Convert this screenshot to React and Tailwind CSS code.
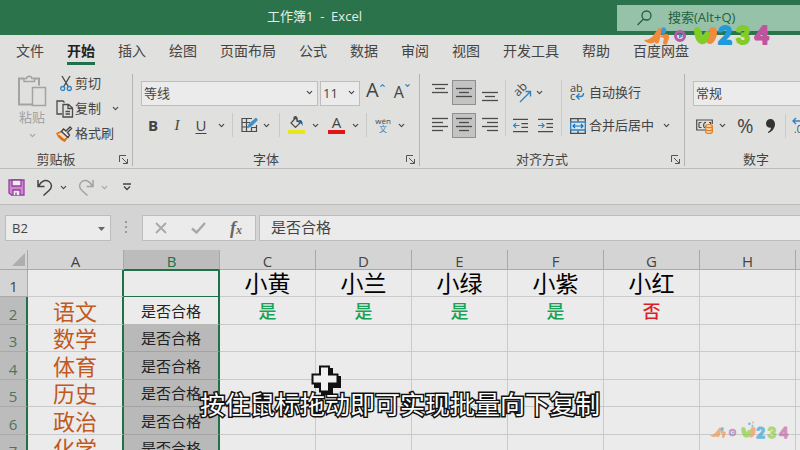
import { ChevronDown } from 'lucide-react';

const tabs = ['文件', '开始', '插入', '绘图', '页面布局', '公式', '数据', '审阅', '视图', '开发工具', '帮助', '百度网盘'];
const columns = ['A', 'B', 'C', 'D', 'E', 'F', 'G', 'H', 'I'];
const names = ['', '', '小黄', '小兰', '小绿', '小紫', '小红', '', ''];
const results = ['是', '是', '是', '是', '否', '', ''];
const subjects = ['语文', '数学', '体育', '历史', '政治', '化学'];

function Chevron({ className = '' }) {
    return <ChevronDown size={9} strokeWidth={3} className={`shrink-0 ${className}`} />;
}

function Launcher() {
    return (
        <button aria-label="更多选项" className="absolute right-1 bottom-1">
            <svg width="9" height="9" viewBox="0 0 9 9" fill="none" stroke="#555">
                <path d="M.5 7V.5H7M3 3l5 5M8.500 4v4.500H4" />
            </svg>
        </button>
    );
}

function Group({ title, className = '', launcher = true, children }) {
    return (
        <section className={`relative flex h-[98px] shrink-0 flex-col whitespace-nowrap ${className}`}>
            <div className="flex-1">{children}</div>
            <h2 className="h-[17px] pr-5 text-center text-[13px] leading-4">{title}</h2>
            {launcher && <Launcher />}
        </section>
    );
}

function Divider() {
    return <div className="mt-1 h-[92px] w-px shrink-0 bg-[#b5b5b4]" />;
}

function Lines({ rows, className = '' }) {
    return (
        <svg width="16" height="20" viewBox="0 0 16 20" stroke="#4b4b4b" strokeWidth="1.300" className={className}>
            {rows.map(([x1, x2, y]) => (
                <path key={y} d={`M${x1} ${y}H${x2}`} />
            ))}
        </svg>
    );
}

const alignTop = [[0, 16, 1.5], [3, 13, 5.5], [0, 16, 9.5]];
const alignMiddle = [[0, 16, 5.5], [3, 13, 9.5], [0, 16, 13.5]];
const alignBottom = [[0, 16, 9.5], [3, 13, 13.5], [0, 16, 17.5]];
const alignLeft = [[0, 16, 2.5], [0, 11, 6.5], [0, 16, 10.5], [0, 11, 14.5]];
const alignCenter = [[0, 16, 2.5], [3, 13, 6.5], [0, 16, 10.5], [3, 13, 14.5]];
const alignRight = [[0, 16, 2.5], [5, 16, 6.5], [0, 16, 10.5], [5, 16, 14.5]];

function PasteIcon() {
    return (
        <svg width="30" height="33" viewBox="0 0 30 33" fill="none" stroke="#a3a3a3" strokeWidth="1.500">
            <path d="M7 4.500H2v26h13M17 4.500h5v7" strokeWidth="2" />
            <path d="M7 7.500V4.500h2.500a2.800 2.800 0 0 1 5.500 0h2.500v3z" />
            <path d="M15.500 13.500h13v18h-13z" />
        </svg>
    );
}

function CutIcon() {
    return (
        <svg width="12" height="17" viewBox="0 0 12 17" fill="none" strokeWidth="1.300">
            <path d="M2 1l6.500 11M10 1L3.500 12" stroke="#444" />
            <circle cx="2.700" cy="13.500" r="2" stroke="#2e83c4" />
            <circle cx="9.300" cy="13.500" r="2" stroke="#2e83c4" />
        </svg>
    );
}

function CopyIcon() {
    return (
        <svg width="18" height="18" viewBox="0 0 18 18" fill="none" stroke="#4b4b4b" strokeWidth="1.300">
            <path d="M6 14H1V1h6l1.500 1.500" />
            <path d="M7 4.500h5.500L16.500 8v9H7zM12 5v3.500h4.500M9.500 11.500h4.500M9.500 14h4.500" />
        </svg>
    );
}

function BrushIcon() {
    return (
        <svg width="17" height="16" viewBox="0 0 17 16" fill="none" strokeWidth="1.400">
            <path d="M6 5.500L1 7.500c1 3 4 6 7.500 7.500l3-4z" fill="#f7d9b8" stroke="#d9731f" />
            <path d="M2.500 9.500l6 5 1.500-2" stroke="#d9731f" strokeWidth="2" />
            <path d="M5.500 5.500l6.500 6 1.500-2.500-2-2.500 4-4L14 1l-4 4-2.500-2z" fill="#eee" stroke="#444" />
        </svg>
    );
}

function BorderIcon() {
    return (
        <svg width="17" height="16" viewBox="0 0 17 16" fill="none">
            <path d="M11 1.500H1v13h14.500V8M1 5.500h8M1 10h6M5.500 1.500v13M10.500 11v3.500M10 10.500h5" stroke="#4b4b4b" strokeWidth="1.200" />
            <path d="M7 10.500l1-3.500 7-6 1.500 2-6.500 6.500z" fill="#3e91cd" stroke="#2878b4" strokeWidth=".6" />
        </svg>
    );
}

function FillIcon() {
    return (
        <svg width="17" height="18" viewBox="0 0 17 18" fill="none">
            <path d="M7.500 2L3 7l4.500 4.500L12 7z M6 4V1.500C7-.5 9.500 1 9 3.500V6" stroke="#4b4b4b" strokeWidth="1.200" />
            <path d="M11 4c3-.5 4 2 3.500 6-1-2.500-2-3-3-3z" fill="#1f5f9e" />
            <path d="M0 14h17v4H0z" fill="#e8e51c" />
        </svg>
    );
}

function OrientationIcon() {
    return (
        <svg width="18" height="18" viewBox="0 0 18 18" fill="none" className="overflow-visible">
            <text transform="translate(5 13) rotate(-45)" fontSize="12" fill="#444">ab</text>
            <path d="M7 18L17 8M12.500 7.500H17.500V12.500" stroke="#2e83c4" strokeWidth="1.400" />
        </svg>
    );
}

function WrapIcon() {
    return (
        <svg width="15" height="17" viewBox="0 0 15 17" fill="none" className="overflow-visible">
            <text x="0" y="8" fontSize="11" fill="#444">ab</text>
            <text x="0" y="16" fontSize="11" fill="#444">c</text>
            <path d="M13.500 9v.5q0 3-3 3H7M9.500 9.500l-3 3 3 3" stroke="#2e83c4" strokeWidth="1.400" />
        </svg>
    );
}

function MergeIcon() {
    return (
        <svg width="16" height="16" viewBox="0 0 16 16" fill="none">
            <path d="M.7.700h14.600v14.600H.7zM8 .7v3M8 12.500v3" stroke="#4b4b4b" strokeWidth="1.300" />
            <path d="M.7 4h14.600v8H.7z" fill="#d5e7f3" stroke="#2e83c4" strokeWidth="1.300" />
            <path d="M3 8h10M5 6L3 8l2 2M11 6l2 2-2 2" stroke="#1f6dac" strokeWidth="1.200" />
        </svg>
    );
}

function IndentIcon({ increase }) {
    return (
        <svg width="15" height="15" viewBox="0 0 16 16" fill="none" stroke="#4b4b4b" strokeWidth="1.300">
            <path d="M0 1.500h16M9 6h7M9 10h7M0 14.500h16" />
            <path d={increase ? 'M0 8h6.500M4 5.500L6.500 8 4 10.500' : 'M7 8H.7M3.200 5.500L.7 8l2.500 2.500'} stroke="#2e83c4" />
        </svg>
    );
}

function CurrencyIcon() {
    return (
        <svg width="18" height="16" viewBox="0 0 18 16" fill="none" stroke="#4b4b4b" strokeWidth="1.200">
            <path d="M9 12H.7V2h15.600v4M3 4.500v5M5.500 4.500H3M3 9.500h2.500M10 4.500C7 4 7 10 9 9.500M13 4.500h1.500V6" />
            <path d="M9.700 8v6c0 2 6.600 2 6.600 0V8c0-2-6.600-2-6.600 0z" fill="#fbd3a4" stroke="#e07b1c" />
            <path d="M9.700 8.500c0 1.500 6.600 1.500 6.600 0M9.700 11.500c0 1.500 6.600 1.500 6.600 0" stroke="#e07b1c" />
        </svg>
    );
}

function Logo({ dots = false, className = '' }) {
    return (
        <svg viewBox="0 0 128 24" role="img" aria-label="HOW234" className={`overflow-visible ${className}`}>
            <path d="M0 16c8 0 10-6 14-11 2-2 5-1 4 2l-3 11c-1 2-4 2-4 0-3 2-8 2-11-2z" fill="#f08a3c" />
            <path d="M17 8c0-5 3-6 5-3 1 3-1 5-4 6z" fill="#3a9ad8" />
            <path d="M16 13c4-4 10-4 9 1l-2 6c-1 1-4 1-4-1l1-5z" fill="#f08a3c" />
            <circle cx="36" cy="12" r="4.500" fill="none" stroke="#b65ab0" strokeWidth="3" />
            <path d="M35 9.500l4 2.500-4 2.500z" fill="#3a9ad8" />
            <path d="M50 5c2-3 6-2 7 1l2 6c1-3 2-5 5-5 3 1 3 4 2 6-2 5-5 8-9 7-5-1-7-9-7-15z" fill="#82cc28" />
            <path d="M65 5c2-3 8-2 8 2 0 6-2 11-6 13-3 0-5-1-4-3 3-3 3-6 2-12z" fill="#f08a3c" />
            {dots && (
                <g>
                    <circle cx="63" cy="-2" r="2.200" fill="#3a9ad8" />
                    <circle cx="69" cy="-4" r="1.600" fill="#f08a3c" />
                    <circle cx="68" cy="1" r="1.600" fill="#3a9ad8" />
                </g>
            )}
            <g fontFamily="Lato" fontSize="24" fontWeight="900" strokeWidth="2" strokeLinejoin="round">
                <text x="74" y="20" fill="#209ad8" stroke="#209ad8">2</text>
                <text x="92" y="20" fill="#82cc28" stroke="#82cc28">3</text>
                <text x="111" y="20" fill="#c0549f" stroke="#c0549f">4</text>
            </g>
        </svg>
    );
}

function ClipboardGroup() {
    return (
        <Group title="剪贴板" className="w-[132px]">
            <div className="flex pl-4">
                <button className="flex w-8 flex-col items-center pt-1 text-[13px] text-[#a3a3a3]">
                    <PasteIcon />
                    <span className="leading-5">粘贴</span>
                    <Chevron className="mt-1" />
                </button>
                <div className="flex flex-col pt-px pl-2 text-[13px]">
                    <button className="flex h-[25px] items-center">
                        <span className="flex w-[19px] justify-center"><CutIcon /></span>剪切
                    </button>
                    <button className="flex h-[25px] items-center">
                        <span className="w-[19px]"><CopyIcon /></span>复制<Chevron className="ml-2.5" />
                    </button>
                    <button className="flex h-[25px] items-center">
                        <span className="w-[19px]"><BrushIcon /></span>格式刷
                    </button>
                </div>
            </div>
        </Group>
    );
}

function FontGroup() {
    return (
        <Group title="字体" className="w-[286px]">
            <div className="mt-2.5 flex h-[25px] pl-2">
                <div className="relative w-[177px] shrink-0">
                    <select aria-label="字体" className="h-full w-full appearance-none border border-[#bebebe] bg-[#ebebeb] pl-0.5 text-[13px]">
                        <option>等线</option>
                    </select>
                    <Chevron className="pointer-events-none absolute top-2 right-1" />
                </div>
                <div className="relative ml-0.5 w-10 shrink-0">
                    <select aria-label="字号" className="h-full w-full appearance-none border border-[#bebebe] bg-[#ebebeb] pl-0.5 text-[13px]">
                        <option>11</option>
                    </select>
                    <Chevron className="pointer-events-none absolute top-2 right-1" />
                </div>
                <button aria-label="增大字号" className="ml-1.5 flex text-xl leading-5">
                    A<ChevronDown size={7} strokeWidth={4} className="mt-0.5 rotate-180 text-[#2e83c4]" />
                </button>
                <button aria-label="减小字号" className="ml-2 flex text-base leading-6">
                    A<ChevronDown size={7} strokeWidth={4} className="mt-0.5 text-[#2e83c4]" />
                </button>
            </div>
            <div className="mt-2 flex h-6 items-center pl-3.5 text-[15px]">
                <button className="w-3 font-bold">B</button>
                <button className="ml-3 w-3 font-['Liberation_Serif'] italic">I</button>
                <button className="ml-3 w-3 underline underline-offset-2">U</button>
                <Chevron className="ml-2.5" />
                <div className="ml-1.5 h-6 w-px bg-[#c9c9c9]" />
                <button aria-label="边框" className="ml-2"><BorderIcon /></button>
                <Chevron className="ml-1" />
                <div className="ml-2 h-6 w-px bg-[#c9c9c9]" />
                <button aria-label="填充颜色" className="ml-2"><FillIcon /></button>
                <Chevron className="ml-1.5" />
                <button className="ml-2 flex h-[18px] w-[17px] items-end justify-center border-b-4 border-[#e2141b] leading-4">A</button>
                <Chevron className="ml-1.5" />
                <div className="ml-1.5 h-6 w-px bg-[#c9c9c9]" />
                <button className="ml-2 flex w-4 flex-col items-center text-[8px] leading-2">
                    wén<span className="text-[#2e83c4]">文</span>
                </button>
                <Chevron className="ml-1.5" />
            </div>
        </Group>
    );
}

function AlignGroup() {
    return (
        <Group title="对齐方式" className="w-[264px]">
            <div className="flex pt-2.5 pl-3">
                <div className="flex flex-col gap-2">
                    <div className="flex h-[25px] items-center">
                        <button aria-label="顶端对齐"><Lines rows={alignTop} /></button>
                        <button aria-label="垂直居中" className="ml-1 flex h-[25px] w-6 items-center justify-center border border-[#8f8f8f] bg-[#c3c3c3]">
                            <Lines rows={alignMiddle} />
                        </button>
                        <button aria-label="底端对齐" className="ml-1.5"><Lines rows={alignBottom} /></button>
                    </div>
                    <div className="flex h-[25px] items-center">
                        <button aria-label="左对齐"><Lines rows={alignLeft} /></button>
                        <button aria-label="居中" className="ml-1 flex h-[25px] w-6 items-center justify-center border border-[#8f8f8f] bg-[#c3c3c3]">
                            <Lines rows={alignCenter} />
                        </button>
                        <button aria-label="右对齐" className="ml-1.5"><Lines rows={alignRight} /></button>
                    </div>
                </div>
                <div className="mx-[7px] h-14 w-px bg-[#c9c9c9]" />
                <div className="flex flex-col gap-2">
                    <div className="flex h-[25px] items-center">
                        <button aria-label="方向"><OrientationIcon /></button>
                        <Chevron className="ml-1" />
                    </div>
                    <div className="flex h-[25px] items-center gap-2.5">
                        <button aria-label="减少缩进量"><IndentIcon /></button>
                        <button aria-label="增加缩进量"><IndentIcon increase /></button>
                    </div>
                </div>
                <div className="mx-2 h-14 w-px bg-[#c9c9c9]" />
                <div className="flex flex-col gap-2 text-[13px]">
                    <button className="flex h-[25px] items-center">
                        <span className="w-[19px]"><WrapIcon /></span>自动换行
                    </button>
                    <button className="flex h-[25px] items-center">
                        <span className="w-[19px]"><MergeIcon /></span>合并后居中<Chevron className="ml-2" />
                    </button>
                </div>
            </div>
        </Group>
    );
}

function NumberGroup() {
    return (
        <Group title="数字" className="w-[162px]" launcher={false}>
            <div className="mt-2.5 h-[25px] pl-2">
                <select aria-label="数字格式" className="h-full w-full appearance-none border border-[#bebebe] bg-[#ebebeb] pl-0.5 text-[13px]">
                    <option>常规</option>
                </select>
            </div>
            <div className="mt-2 flex h-[25px] items-center pl-[11px]">
                <button aria-label="会计数字格式"><CurrencyIcon /></button>
                <Chevron className="ml-1" />
                <button className="ml-2.5 text-xl leading-6">%</button>
                <button aria-label="千位分隔" className="ml-3">
                    <svg width="9" height="14" viewBox="0 0 9 14" fill="#333">
                        <path d="M4.500 0C7 0 9 2 9 5c0 4-3 8-7 9v-1c2-1 3-3 3-4.500C2 9.500 0 7 0 4.500 0 2 2 0 4.500 0z" />
                    </svg>
                </button>
                <div className="ml-2.5 h-6 w-px bg-[#c9c9c9]" />
                <button aria-label="增加小数位数" className="ml-1.5">
                    <svg width="18" height="17" viewBox="0 0 18 17" fill="none">
                        <path d="M8 4H1M4 1L1 4l3 3" stroke="#2e83c4" strokeWidth="1.400" />
                        <text x="2" y="16" fontSize="10" fill="#444">.00</text>
                    </svg>
                </button>
            </div>
        </Group>
    );
}

function QuickAccess() {
    return (
        <div className="flex h-[37px] shrink-0 items-center border-y border-[#bcbcbc] bg-[#e0e0de] pt-px pl-2 text-[#444]">
            <button aria-label="保存">
                <svg width="17" height="17" viewBox="0 0 17 17" fill="#cf86d3" stroke="#9440a0" strokeWidth="1.300">
                    <path d="M1 1h15v15H3.500L1 14z" />
                    <path d="M4 1h9v6H4zM5 16v-5h7v5" fill="#eee" />
                    <path d="M8 16v-2.500" />
                </svg>
            </button>
            <button aria-label="撤消" className="ml-3">
                <svg width="16" height="17" viewBox="0 0 16 17" fill="none" stroke="currentColor" strokeWidth="1.500">
                    <path d="M1 1v6.500h6.500M1.500 7C5 1 9 .5 12 2.500c3.500 2.500 3 6.500 0 9L6.500 16.500" />
                </svg>
            </button>
            <Chevron className="ml-1.5" />
            <button aria-label="恢复" className="ml-2.5 text-[#a3a3a3]">
                <svg width="16" height="17" viewBox="0 0 16 17" fill="none" stroke="currentColor" strokeWidth="1.500">
                    <path d="M15 1v6.500H8.500M14.500 7C11 1 7 .5 4 2.500c-3.500 2.500-3 6.500 0 9l5.500 5" />
                </svg>
            </button>
            <Chevron className="ml-1.5 text-[#a3a3a3]" />
            <button aria-label="自定义快速访问工具栏" className="ml-3.5">
                <svg width="8" height="8" viewBox="0 0 8 8" fill="none" stroke="currentColor" strokeWidth="1.300">
                    <path d="M0 1h8M1 3.500l3 3 3-3" />
                </svg>
            </button>
        </div>
    );
}

function FormulaBar() {
    return (
        <div className="flex h-[45px] shrink-0 bg-[#d4d4d4] pt-2.5 pb-2 pl-[5px]">
            <div className="relative w-[106px]">
                <input aria-label="名称框" defaultValue="B2" className="h-[26px] w-full border border-[#bdbdbd] bg-[#ebebeb] pl-1.5 text-[13px]" />
                <svg width="7" height="4" viewBox="0 0 7 4" className="absolute top-3 right-1.5" fill="#666"><path d="M0 0h7L3.500 4z" /></svg>
            </div>
            <svg width="3" height="12" viewBox="0 0 3 12" className="mt-1.5 ml-3.5" fill="#999"><path d="M0 0h2v2H0zM0 5h2v2H0zM0 10h2v2H0z" /></svg>
            <div className="ml-3.5 flex h-[26px] w-[114px] items-center border border-[#bdbdbd] bg-[#ebebeb] pl-3">
                <button aria-label="取消">
                    <svg width="12" height="12" viewBox="0 0 12 12" stroke="#a8a8a8" strokeWidth="1.800"><path d="M1 1l10 10M11 1L1 11" /></svg>
                </button>
                <button aria-label="输入" className="ml-6">
                    <svg width="15" height="12" viewBox="0 0 15 12" fill="none" stroke="#a8a8a8" strokeWidth="2.400"><path d="M1 6.500l4.500 4L14 1" /></svg>
                </button>
                <button className="ml-6 font-['Liberation_Serif'] text-lg leading-6 font-bold text-[#666] italic">
                    f<span className="text-xs">x</span>
                </button>
            </div>
            <input aria-label="编辑栏" defaultValue="是否合格" className="ml-[3px] h-[26px] min-w-0 flex-1 border border-r-0 border-[#bdbdbd] bg-[#ebebeb] pb-1 pl-[11px] text-[15px]" />
        </div>
    );
}

function Sheet() {
    return (
        <div className="flex-1 overflow-hidden bg-[#ebebeb]">
            <table className="w-[891px] table-fixed border-separate border-spacing-0 text-center">
                <thead>
                    <tr className="h-5 bg-[#d4d4d4] text-[15px] leading-4 text-[#444]">
                        <th className="w-7 border-r border-b border-[#a9a9a9] p-0">
                            <svg width="13" height="13" viewBox="0 0 13 13" className="mr-0.5 ml-auto" fill="#aeaeae"><path d="M13 0v13H0z" /></svg>
                        </th>
                        {columns.map((col) => (
                            <th
                                key={col}
                                className={`w-24 border-r border-b p-0 pt-0.5 font-normal ${col === 'B' ? 'border-r-[#a9a9a9] border-b-[#20704a] bg-[#bcbcbc] text-[#20704a]' : 'border-[#a9a9a9]'}`}
                            >
                                {col}
                            </th>
                        ))}
                    </tr>
                </thead>
                <tbody>
                    <tr className="h-[27px] text-[23px] leading-6 text-black">
                        <th className="border-r border-b border-[#a9a9a9] bg-[#d4d4d4] p-0 align-bottom text-[15px] leading-5 font-normal text-[#444]">1</th>
                        {names.map((name, i) => (
                            <td
                                key={columns[i]}
                                className={`border-b p-0 ${i === 1 ? 'border-t border-r-2 border-[#20704a]' : i === 0 ? 'border-r-2 border-r-[#20704a] border-b-[#cacaca]' : 'border-r border-[#cacaca]'}`}
                            >
                                {name}
                            </td>
                        ))}
                    </tr>
                    {subjects.map((subject, row) => (
                        <tr key={subject} className="odd:h-[27px] even:h-7">
                            <th className="border-r-2 border-b border-r-[#20704a] border-b-[#a9a9a9] bg-[#bcbcbc] p-0 align-bottom text-[15px] leading-5 font-normal text-[#4b7460]">
                                {row + 2}
                            </th>
                            <td className="border-r-2 border-b border-r-[#20704a] border-b-[#cacaca] p-0 text-[22px] leading-6 text-[#c0591c]">{subject}</td>
                            <td className={`border-r-2 border-b border-r-[#20704a] p-0 text-[15px] leading-6 text-[#222] ${row === 0 ? 'border-b-[#b9b9b9]' : 'border-b-[#a3a3a3] bg-[#b9b9b9]'}`}>
                                是否合格
                            </td>
                            {columns.slice(2).map((col, i) => (
                                <td key={col} className={`border-r border-b border-[#cacaca] p-0 text-lg leading-6 font-medium ${results[i] === '否' ? 'text-[#dc1f26]' : 'text-[#17a255]'}`}>
                                    {row === 0 ? results[i] : ''}
                                </td>
                            ))}
                        </tr>
                    ))}
                </tbody>
            </table>
        </div>
    );
}

export default function App() {
    return (
        <div className="relative flex h-screen flex-col overflow-hidden bg-[#e0e0de] font-['Open_Sans','Noto_Sans_CJK_SC',sans-serif] text-[#444]">
            <header className="flex h-[35px] shrink-0 justify-end bg-[#2b734b]">
                <h1 className="flex-1 pl-[267px] text-[13px] leading-8 whitespace-pre text-[#e6efe9]">工作簿1  -  Excel</h1>
                <label className="mt-[5px] flex h-[26px] w-[183px] items-center bg-[#95c2a9] pl-5 text-[#265f40]">
                    <svg width="15" height="16" viewBox="0 0 15 16" fill="none" stroke="currentColor" strokeWidth="1.300">
                        <circle cx="9.500" cy="5.500" r="4.500" />
                        <path d="M6.500 9L.5 15" />
                    </svg>
                    <input aria-label="搜索" placeholder="搜索(Alt+Q)" className="ml-4 w-28 bg-transparent text-[13px] placeholder:text-[#265f40]" />
                </label>
            </header>

            <nav className="flex h-[35px] shrink-0 gap-[23px] pl-4 text-sm leading-8">
                {tabs.map((tab) => (
                    <button key={tab} className={`h-[30px] shrink-0 border-b-3 ${tab === '开始' ? 'border-[#20704a] font-bold text-[#222]' : 'border-transparent'}`}>
                        {tab}
                    </button>
                ))}
            </nav>

            <div className="flex h-[98px] shrink-0 overflow-hidden">
                <ClipboardGroup />
                <Divider />
                <FontGroup />
                <Divider />
                <AlignGroup />
                <Divider />
                <NumberGroup />
            </div>

            <QuickAccess />
            <FormulaBar />
            <Sheet />

            {/* cell cursor */}
            <svg width="30" height="30" viewBox="0 0 30 30" className="absolute top-[365px] left-[311px]">
                <path d="M10 3h12v8h8v12h-8v7H10v-7H3V11h7z" fill="#111" />
                <path d="M9 1.500h9v8h8.500v9H18v8H9v-8H1.500v-9H9z" fill="#f2f2f2" stroke="#111" strokeWidth="2" />
            </svg>

            {/* subtitle */}
            <p className="absolute inset-x-0 bottom-7 text-center text-[25px] leading-9 text-white [paint-order:stroke_fill] [-webkit-text-stroke:3px_#111]">
                按住鼠标拖动即可实现批量向下复制
            </p>

            <Logo className="absolute top-6 right-7 w-32" />
            <Logo dots className="absolute right-2.5 bottom-2.5 w-20 opacity-60" />
        </div>
    );
}
